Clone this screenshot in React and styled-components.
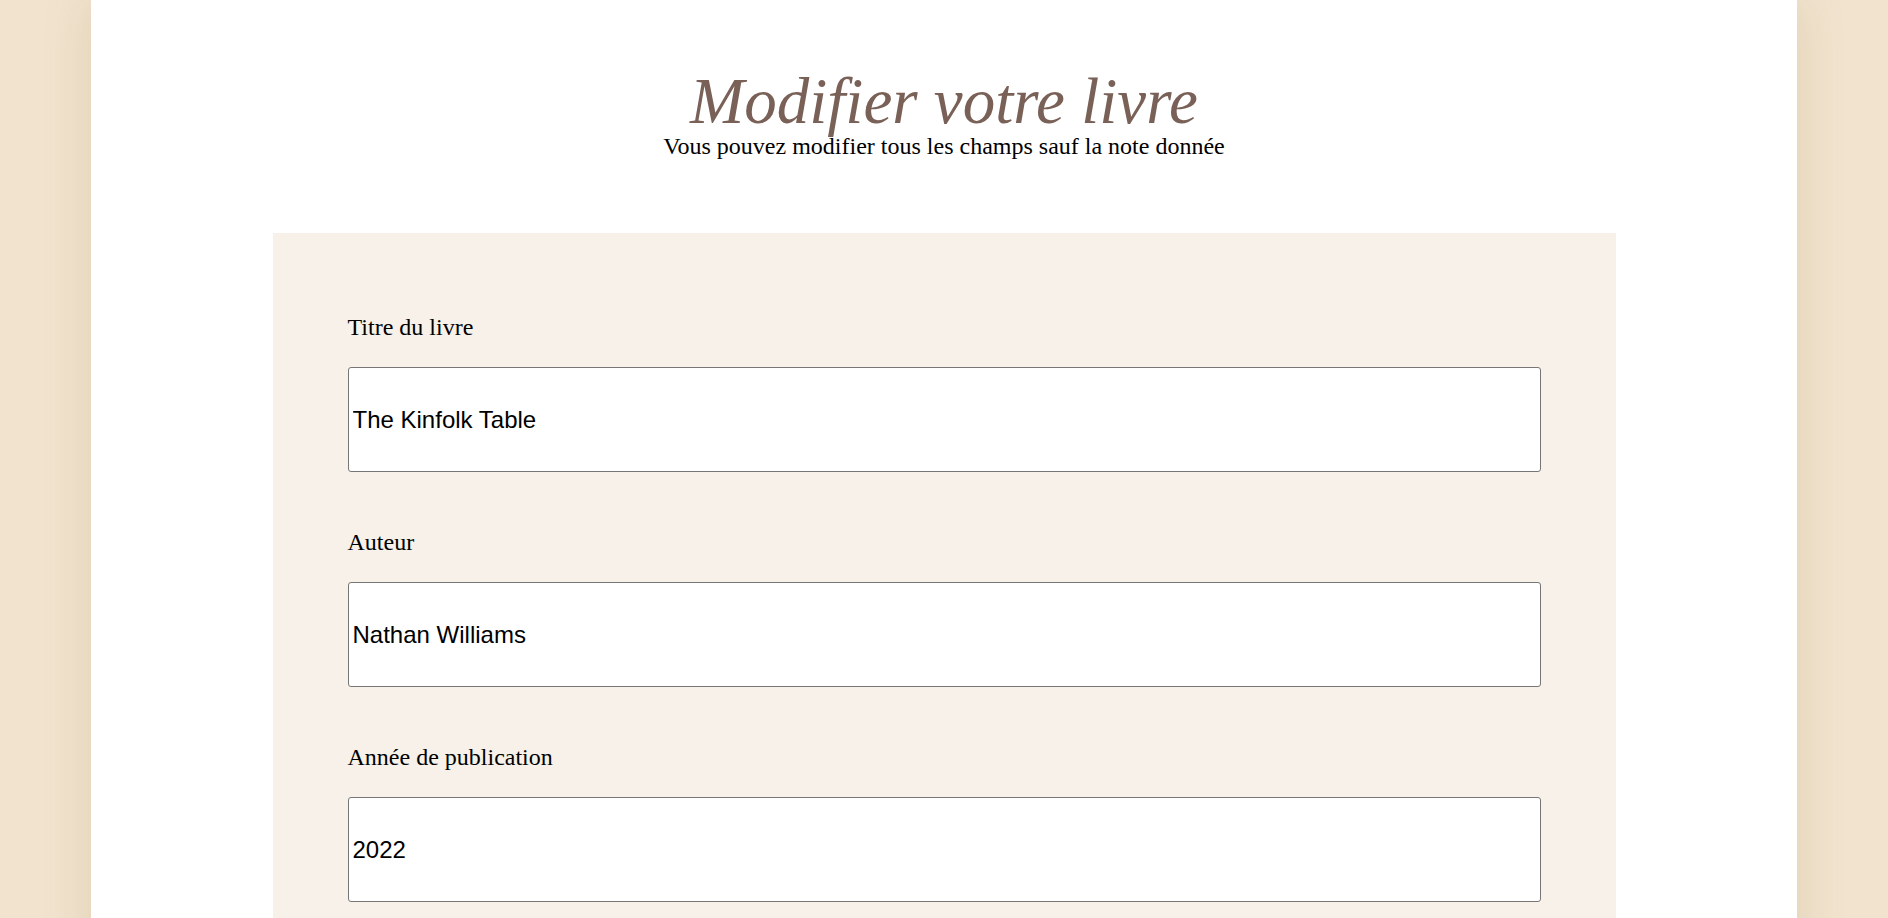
import React, { useState } from "react";
import styled, { createGlobalStyle } from "styled-components";

const GlobalStyle = createGlobalStyle`
  html, body {
    margin: 0;
    padding: 0;
  }
  body {
    background-color: #f1e3ce;
    font-family: "Liberation Serif", "Times New Roman", serif;
    color: #000;
  }
`;

const PageWrapper = styled.div`
  padding: 0 91px;
  min-height: 100vh;
`;

const Sheet = styled.main`
  background-color: #fff;
  min-height: 100vh;
  box-shadow: 0 0 45px rgba(150, 115, 60, 0.18);
  padding-top: 69px;
  padding-bottom: 80px;
`;

const Header = styled.header`
  text-align: center;
  margin-bottom: 73px;
`;

const Title = styled.h1`
  margin: 0;
  font-family: "Liberation Serif", "Times New Roman", serif;
  font-style: italic;
  font-weight: normal;
  font-size: 65px;
  line-height: 1;
  color: #7a6158;
`;

const Subtitle = styled.p`
  margin: -1px 0 0;
  font-size: 24px;
`;

const FormPanel = styled.form`
  width: 1343px;
  box-sizing: border-box;
  margin: 0 auto;
  padding: 81px 75px 60px;
  background-color: #f7f1ea;
  display: flex;
  flex-direction: column;
  gap: 57px;
`;

const Field = styled.div`
  display: flex;
  flex-direction: column;
`;

const Label = styled.label`
  font-size: 24px;
  margin-bottom: 26px;
`;

const TextInput = styled.input`
  box-sizing: border-box;
  width: 100%;
  height: 105px;
  padding: 0 4px;
  border: 1px solid #767676;
  border-radius: 3px;
  background: #fff;
  font-family: "Liberation Sans", Arial, sans-serif;
  font-size: 24px;
  color: #000;
  outline: none;
`;

export default function App() {
  const [book, setBook] = useState({
    title: "The Kinfolk Table",
    author: "Nathan Williams",
    year: "2022",
  });

  function handleChange(key) {
    return (e) => setBook({ ...book, [key]: e.target.value });
  }

  return (
    <>
      <GlobalStyle />
      <PageWrapper>
        <Sheet>
          <Header>
            <Title>Modifier votre livre</Title>
            <Subtitle>Vous pouvez modifier tous les champs sauf la note donnée</Subtitle>
          </Header>
          <FormPanel onSubmit={(e) => e.preventDefault()}>
            <Field>
              <Label htmlFor="title">Titre du livre</Label>
              <TextInput id="title" value={book.title} onChange={handleChange("title")} />
            </Field>
            <Field>
              <Label htmlFor="author">Auteur</Label>
              <TextInput id="author" value={book.author} onChange={handleChange("author")} />
            </Field>
            <Field>
              <Label htmlFor="year">Année de publication</Label>
              <TextInput id="year" value={book.year} onChange={handleChange("year")} />
            </Field>
          </FormPanel>
        </Sheet>
      </PageWrapper>
    </>
  );
}
